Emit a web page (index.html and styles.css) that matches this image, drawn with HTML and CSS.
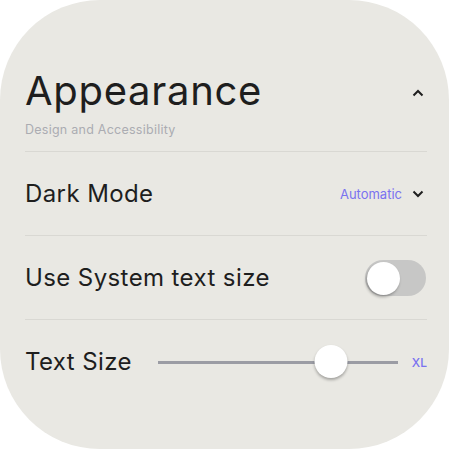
FILE: index.html
```html
<!DOCTYPE html>
<html>
<head>
<meta charset="utf-8">
<link rel="stylesheet" href="styles.css">
</head>
<body>
<div class="card">
  <div class="header">
    <div class="title-row">
      <h1 class="title">Appearance</h1>
      <svg class="chev" width="12" height="8" viewBox="0 0 12 8"><path d="M1.5 6.5 L6 2 L10.5 6.5" fill="none" stroke="#1f1f1f" stroke-width="2"/></svg>
    </div>
    <div class="subtitle">Design and Accessibility</div>
  </div>
  <div class="row">
    <span class="label">Dark Mode</span>
    <div class="select">
      <span class="value">Automatic</span>
      <svg class="chev" width="12" height="8" viewBox="0 0 12 8"><path d="M1.5 1.5 L6 6 L10.5 1.5" fill="none" stroke="#1f1f1f" stroke-width="2"/></svg>
    </div>
  </div>
  <div class="row">
    <span class="label">Use System text size</span>
    <div class="toggle"><div class="knob"></div></div>
  </div>
  <div class="row">
    <span class="label">Text Size</span>
    <div class="slider">
      <div class="track"></div>
      <div class="thumb" style="left: 72%"></div>
    </div>
    <span class="xl">XL</span>
  </div>
</div>
</body>
</html>
```

FILE: styles.css
```css
html, body {
  margin: 0;
  padding: 0;
  background: #ffffff;
}
body {
  width: 450px;
  height: 450px;
  font-family: Inter, "Noto Sans", sans-serif;
  color: #1e1e1e;
}
.card {
  width: 449px;
  height: 449px;
  box-sizing: border-box;
  background: #e9e8e3;
  border-radius: 100px;
  padding: 0 22px 0 25px;
  display: flex;
  flex-direction: column;
}
.header {
  padding: 67px 0 13px 0;
}
.title-row {
  display: flex;
  align-items: center;
  justify-content: space-between;
}
.title {
  margin: 0;
  font-size: 40px;
  line-height: 48px;
  font-weight: 400;
  letter-spacing: 0.7px;
}
.title-row .chev {
  margin-right: 3px;
  margin-top: 4px;
}
.subtitle {
  margin-top: 7px;
  font-size: 12.5px;
  line-height: 16px;
  letter-spacing: 0.25px;
  color: #abacb2;
}
.row {
  height: 84px;
  box-sizing: border-box;
  border-top: 1px solid #d9d8d3;
  display: flex;
  align-items: center;
  justify-content: space-between;
  padding-top: 1px;
}
.label {
  font-size: 24px;
  line-height: 30px;
  letter-spacing: 0.4px;
}
.select {
  display: flex;
  align-items: center;
  gap: 10px;
  margin-right: 3px;
}
.value {
  font-size: 13px;
  color: #7a72f0;
}
.toggle {
  width: 61px;
  height: 36px;
  border-radius: 18px;
  background: #c7c7c6;
  display: flex;
  align-items: center;
  padding-left: 2px;
  box-sizing: border-box;
  margin-right: 1px;
}
.knob {
  width: 33px;
  height: 33px;
  border-radius: 50%;
  background: #ffffff;
  box-shadow: -1px 2px 3px rgba(0,0,0,0.3);
}
.slider {
  position: relative;
  width: 240px;
  height: 34px;
  margin-left: auto;
  display: flex;
  align-items: center;
}
.track {
  width: 100%;
  height: 3px;
  background: #9b9ca4;
}
.thumb {
  position: absolute;
  top: 0;
  width: 33px;
  height: 33px;
  border-radius: 50%;
  background: #ffffff;
  transform: translateX(-50%);
  box-shadow: 0 2px 3px rgba(0,0,0,0.3);
}
.xl {
  margin-left: 14px;
  font-size: 12px;
  font-weight: 500;
  color: #7a72f0;
}
```
